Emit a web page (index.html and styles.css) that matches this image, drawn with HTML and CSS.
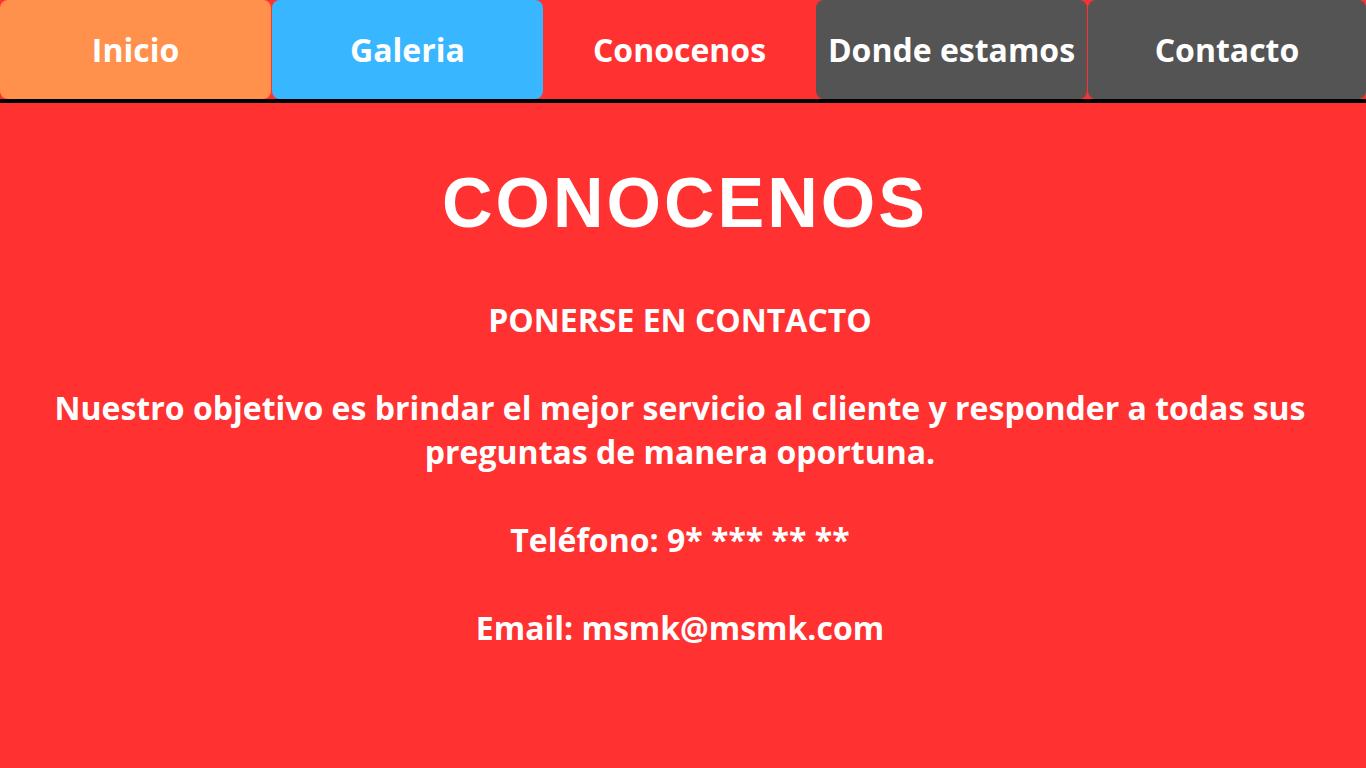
FILE: index.html
```html
<!DOCTYPE html>
<html lang="es">
<head>
<meta charset="utf-8">
<title>Conocenos</title>
<link rel="stylesheet" href="styles.css">
</head>
<body>
<nav class="nav">
  <a class="tab tab-orange" href="#">Inicio</a>
  <a class="tab tab-blue" href="#">Galeria</a>
  <a class="tab tab-red" href="#">Conocenos</a>
  <a class="tab tab-gray" href="#">Donde estamos</a>
  <a class="tab tab-gray tab-last" href="#">Contacto</a>
</nav>
<main class="content">
  <h1 class="title">CONOCENOS</h1>
  <p class="line">PONERSE EN CONTACTO</p>
  <p class="line">Nuestro objetivo es brindar el mejor servicio al cliente y responder a todas sus preguntas de manera oportuna.</p>
  <p class="line">Teléfono: 9* *** ** **</p>
  <p class="line">Email: msmk@msmk.com</p>
</main>
</body>
</html>
```
FILE: styles.css
```css
html, body {
  margin: 0;
  padding: 0;
  height: 100%;
}
body {
  background: #ff3131;
  font-family: "Open Sans", "Liberation Sans", sans-serif;
  color: #ffffff;
}
.nav {
  display: flex;
  gap: 1px;
  height: 99px;
  border-bottom: 4px solid #000000;
}
.tab {
  flex: 0 0 271px;
  display: flex;
  align-items: center;
  justify-content: center;
  border-radius: 8px;
  color: #ffffff;
  text-decoration: none;
  font-weight: 700;
  font-size: 32px;
}
.tab-last {
  flex: 1 1 auto;
}
.tab-orange { background: #ff914d; }
.tab-blue { background: #38b6ff; }
.tab-red { background: #ff3131; }
.tab-gray { background: #545454; }
.content {
  text-align: center;
  padding: 60px 40px 0;
}
.title {
  margin: 0 0 55px;
  padding-left: 4px;
  font-family: "Liberation Sans", Arial, sans-serif;
  font-weight: 700;
  font-size: 70px;
  line-height: 80px;
  letter-spacing: 3px;
}
.line {
  margin: 0 0 44px;
  padding-right: 6px;
  font-weight: 700;
  font-size: 32px;
  line-height: 44px;
}
```
